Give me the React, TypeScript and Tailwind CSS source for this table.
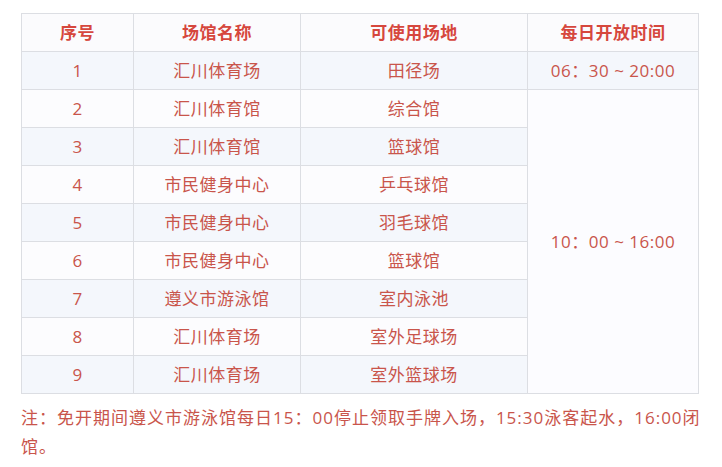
import React from "react";

const rows = [
  { no: "1", venue: "汇川体育场", place: "田径场" },
  { no: "2", venue: "汇川体育馆", place: "综合馆" },
  { no: "3", venue: "汇川体育馆", place: "篮球馆" },
  { no: "4", venue: "市民健身中心", place: "乒乓球馆" },
  { no: "5", venue: "市民健身中心", place: "羽毛球馆" },
  { no: "6", venue: "市民健身中心", place: "篮球馆" },
  { no: "7", venue: "遵义市游泳馆", place: "室内泳池" },
  { no: "8", venue: "汇川体育场", place: "室外足球场" },
  { no: "9", venue: "汇川体育场", place: "室外篮球场" },
];

const cell = "border border-[#dcdee3] text-center align-middle h-[38px] p-0";

export default function App() {
  return (
    <div
      className="bg-white w-[722px] h-[467px] pl-[21px] pt-[13px] text-[17px] text-[#c9554b]"
      style={{ fontFamily: '"Open Sans", "Noto Sans CJK SC", sans-serif' }}
    >
      <table className="table-fixed border-collapse w-[677px] tracking-[0.5px]">
        <colgroup>
          <col className="w-[112px]" />
          <col className="w-[167px]" />
          <col className="w-[227px]" />
          <col className="w-[171px]" />
        </colgroup>
        <thead>
          <tr className="bg-[#fbfbfd] text-[#d6473d] font-bold">
            <th className={cell}>序号</th>
            <th className={cell}>场馆名称</th>
            <th className={cell}>可使用场地</th>
            <th className={cell}>每日开放时间</th>
          </tr>
        </thead>
        <tbody>
          {rows.map((r, i) => (
            <tr key={r.no} className={i % 2 === 0 ? "bg-[#f4f7fc]" : "bg-[#fcfcfe]"}>
              <td className={cell}>{r.no}</td>
              <td className={cell}>{r.venue}</td>
              <td className={cell}>{r.place}</td>
              {i === 0 && <td className={cell}>06：30 ~ 20:00</td>}
              {i === 1 && (
                <td className={cell + " bg-[#fcfcff]"} rowSpan={8}>
                  10：00 ~ 16:00
                </td>
              )}
            </tr>
          ))}
        </tbody>
      </table>
      <p className="mt-[9px] leading-[29px] w-[680px] tracking-[1px]">
        注：免开期间遵义市游泳馆每日15：00停止领取手牌入场，15:30泳客起水，16:00闭馆。
      </p>
    </div>
  );
}
